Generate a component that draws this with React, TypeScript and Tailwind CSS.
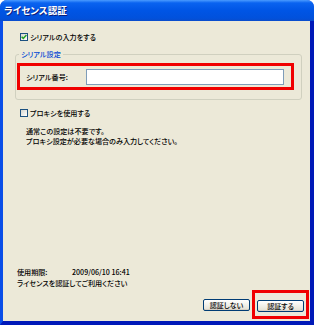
const jp = "font-['Noto_Sans_CJK_JP','Noto_Sans',sans-serif] [font-feature-settings:'palt']";

function Check({ checked }: { checked?: boolean }) {
  return (
    <span className="flex h-[8px] w-[8px] shrink-0 items-center justify-center border border-[#1c5180] bg-gradient-to-br from-[#d6d6cf] to-white">
      {checked && (
        <svg width="6" height="6" viewBox="0 0 6 6">
          <path d="M0.6 2.7 L2.3 4.4 L5.4 1.1" fill="none" stroke="#21a121" strokeWidth="1.5" />
        </svg>
      )}
    </span>
  );
}

function XpButton({ label }: { label: string }) {
  return (
    <button className="flex h-[12px] w-[47px] items-center justify-center rounded-[2px] border border-[#003c74] bg-gradient-to-b from-white to-[#e3e0d3] text-[7px] leading-[10px] text-black shadow-[inset_0_-1px_0_#d6d0c5]">
      {label}
    </button>
  );
}

export default function App() {
  return (
    <div className={`flex h-[325px] w-[314px] flex-col overflow-hidden rounded-t-[7px] bg-[#0842e0] ${jp}`}>
      {/* title bar */}
      <div className="flex h-[21px] shrink-0 items-center bg-[linear-gradient(to_bottom,#4a9bff_0%,#0a63f0_14%,#0055e5_50%,#0151dc_86%,#0a4ccc_100%)] pl-[4px]">
        <span className="text-[9.5px] font-bold text-white [text-shadow:1px_1px_0_#0a1e7a]">ライセンス認証</span>
      </div>

      {/* body */}
      <div className="flex flex-1 flex-col border-r-[4px] border-b-[4px] border-l-[3px] border-r-[#0019b8] border-b-[#0019b8] border-l-[#0a4ee8] bg-[#ece9d8] text-[7.1px] leading-[8px] font-medium text-black">
        <label className="mt-[12px] ml-[17px] flex h-[8px] items-center gap-[2px]">
          <Check checked />
          <span>シリアルの入力をする</span>
        </label>

        <fieldset className="mt-[8px] ml-[12px] w-[287px] rounded-[3px] border border-[#d0d0bf] pb-[9px] pl-px">
          <legend className="ml-[2px] px-[2px] leading-[10px] text-[#0046d5]">シリアル設定</legend>
          <div className="mt-[4px] flex h-[27px] w-[277px] items-center border-[3px] border-[#f00000] pl-[6px]">
            <span className="w-[60px]">シリアル番号:</span>
            <input className="h-[16px] w-[198px] border border-[#7f9db9] bg-white outline-none" />
          </div>
        </fieldset>

        <label className="mt-[9px] ml-[17px] flex h-[8px] items-center gap-[2px]">
          <Check />
          <span>プロキシを使用する</span>
        </label>

        <div className="mt-[10px] ml-[23px] leading-[9.5px]">
          <p>通常この設定は不要です。</p>
          <p>プロキシ設定が必要な場合のみ入力してください。</p>
        </div>

        <div className="flex-1" />

        <div className="ml-[14px] flex items-center leading-[11px]">
          <span className="w-[55px]">使用期限:</span>
          <span>2009/06/10 16:41</span>
        </div>
        <p className="ml-[14px] leading-[11px]">ライセンスを認証してご利用ください</p>

        <div className="mt-px mb-[2px] flex items-center justify-end gap-[2px] pr-px">
          <XpButton label="認証しない" />
          <div className="border-[3px] border-[#f00000] px-[2px] pt-[7px] pb-[4px]">
            <XpButton label="認証する" />
          </div>
        </div>
      </div>
    </div>
  );
}
